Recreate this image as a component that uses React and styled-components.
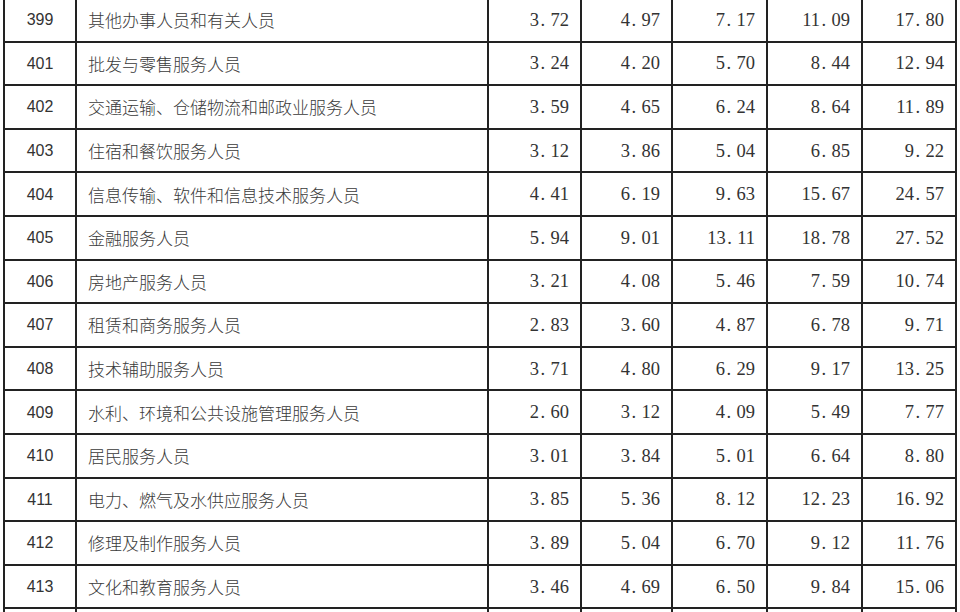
import React from "react";
import styled, { createGlobalStyle } from "styled-components";

const Global = createGlobalStyle`
  html, body { margin: 0; padding: 0; background: #ffffff; overflow: hidden; }
  body { width: 960px; height: 612px; }
`;

const rows = [
  ["399", "其他办事人员和有关人员", ["3.72", "4.97", "7.17", "11.09", "17.80"]],
  ["401", "批发与零售服务人员", ["3.24", "4.20", "5.70", "8.44", "12.94"]],
  ["402", "交通运输、仓储物流和邮政业服务人员", ["3.59", "4.65", "6.24", "8.64", "11.89"]],
  ["403", "住宿和餐饮服务人员", ["3.12", "3.86", "5.04", "6.85", "9.22"]],
  ["404", "信息传输、软件和信息技术服务人员", ["4.41", "6.19", "9.63", "15.67", "24.57"]],
  ["405", "金融服务人员", ["5.94", "9.01", "13.11", "18.78", "27.52"]],
  ["406", "房地产服务人员", ["3.21", "4.08", "5.46", "7.59", "10.74"]],
  ["407", "租赁和商务服务人员", ["2.83", "3.60", "4.87", "6.78", "9.71"]],
  ["408", "技术辅助服务人员", ["3.71", "4.80", "6.29", "9.17", "13.25"]],
  ["409", "水利、环境和公共设施管理服务人员", ["2.60", "3.12", "4.09", "5.49", "7.77"]],
  ["410", "居民服务人员", ["3.01", "3.84", "5.01", "6.64", "8.80"]],
  ["411", "电力、燃气及水供应服务人员", ["3.85", "5.36", "8.12", "12.23", "16.92"]],
  ["412", "修理及制作服务人员", ["3.89", "5.04", "6.70", "9.12", "11.76"]],
  ["413", "文化和教育服务人员", ["3.46", "4.69", "6.50", "9.84", "15.06"]],
  ["", "", ["", "", "", "", ""]],
];

const Page = styled.div`
  width: 960px;
  height: 612px;
  overflow: hidden;
  background: #fff;
`;

const Table = styled.div`
  margin-top: -1px;
  margin-left: 3px;
  width: 954px;
  border-left: 2px solid #222;
  display: grid;
  grid-auto-rows: 43.6px;
`;

const Row = styled.div`
  display: grid;
  grid-template-columns: 72px 412px 93px 91px 95px 95px 94px;
`;

const Cell = styled.div`
  box-sizing: border-box;
  border-right: 2px solid #222;
  border-bottom: 2px solid #222;
  display: flex;
  align-items: center;
  min-width: 0;
  white-space: nowrap;
`;

const CodeCell = styled(Cell)`
  justify-content: center;
  font-family: "Liberation Sans", Arial, sans-serif;
  font-size: 16px;
  color: #333;
  padding-top: 1px;
`;

const NameCell = styled(Cell)`
  padding-left: 11px;
  font-family: "Noto Sans CJK SC", "Noto Sans", sans-serif;
  font-size: 17px;
  font-weight: 300;
  color: #3a3a3a;
`;

const NumCell = styled(Cell)`
  justify-content: flex-end;
  padding-right: 11px;
  font-family: "Liberation Serif", "Times New Roman", serif;
  font-size: 18.5px;
  color: #333;
  padding-top: 1px;
`;

const Dot = styled.span`
  display: inline-block;
  width: 0.62em;
  padding-left: 0.08em;
  box-sizing: border-box;
`;

function Num({ value }) {
  if (!value) return null;
  const [a, b] = value.split(".");
  return (
    <span>
      {a}
      <Dot>.</Dot>
      {b}
    </span>
  );
}

export default function App() {
  return (
    <Page>
      <Global />
      <Table>
        {rows.map(([code, name, nums], i) => (
          <Row key={i}>
            <CodeCell>{code}</CodeCell>
            <NameCell>{name}</NameCell>
            {nums.map((n, j) => (
              <NumCell key={j}>
                <Num value={n} />
              </NumCell>
            ))}
          </Row>
        ))}
      </Table>
    </Page>
  );
}
